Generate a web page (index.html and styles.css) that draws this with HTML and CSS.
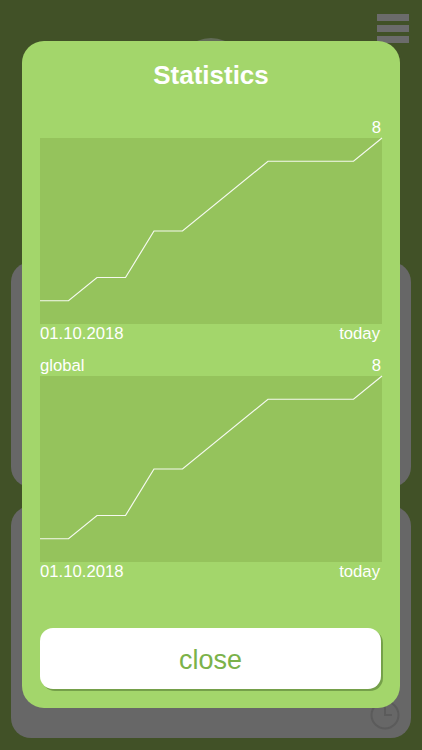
FILE: index.html
```html
<!DOCTYPE html>
<html lang="en">
<head>
    <meta charset="UTF-8">
    <title>Statistics</title>
    <link rel="stylesheet" href="styles.css">
</head>
<body>
    <div class="page">
        <div class="topbar">
            <div class="menu">
                <span></span><span></span><span></span>
            </div>
        </div>
        <div class="avatar"></div>
        <div class="card card-top"></div>
        <div class="card card-bottom">
            <svg class="clock" width="30" height="30" viewBox="0 0 30 30">
                <circle cx="15" cy="15" r="13.5" fill="none" stroke="#5b5b5b" stroke-width="2"/>
                <path d="M15 6 V15 H22" fill="none" stroke="#5b5b5b" stroke-width="2"/>
            </svg>
        </div>
    </div>

    <div class="modal">
        <h1 class="title">Statistics</h1>

        <div class="stat">
            <div class="stat-head"><span></span><span>8</span></div>
            <div class="chart">
                <svg viewBox="0 0 12 8" preserveAspectRatio="none">
                    <polyline points="0,7 1,7 2,6 3,6 4,4 5,4 8,1 11,1 12,0"/>
                </svg>
            </div>
            <div class="stat-foot"><span>01.10.2018</span><span>today</span></div>
        </div>

        <div class="stat">
            <div class="stat-head"><span>global</span><span>8</span></div>
            <div class="chart">
                <svg viewBox="0 0 12 8" preserveAspectRatio="none">
                    <polyline points="0,7 1,7 2,6 3,6 4,4 5,4 8,1 11,1 12,0"/>
                </svg>
            </div>
            <div class="stat-foot"><span>01.10.2018</span><span>today</span></div>
        </div>

        <button class="close" type="button">close</button>
    </div>
</body>
</html>
```

FILE: styles.css
```css
body { margin: 0; background: #415127; font-family: "Liberation Sans", Arial, sans-serif; }

.page { width: 422px; height: 750px; display: flex; flex-direction: column; align-items: center; overflow: hidden; }
.topbar { align-self: stretch; display: flex; justify-content: flex-end; padding: 14px 13px 0 0; }
.menu { display: flex; flex-direction: column; gap: 4px; }
.menu span { display: block; width: 32px; height: 7px; background: #6b6b6b; }
.avatar { width: 70px; height: 70px; margin-top: -5px; border-radius: 50%; background: #626b58; }
.card { width: 400px; background: #676767; border-radius: 20px; }
.card-top { height: 225px; margin-top: 154px; }
.card-bottom { height: 232px; margin-top: 19px; display: flex; align-items: flex-end; justify-content: flex-end; padding: 0 11px 8px 0; box-sizing: border-box; }

.modal {
    position: absolute; left: 22px; top: 41px;
    width: 378px; height: 667px; box-sizing: border-box;
    padding: 18.5px 18px 19px;
    background: #a3d66b; border-radius: 22px;
    display: flex; flex-direction: column;
    color: #fff;
}
.title { margin: 0 0 30px; font-size: 26px; line-height: 30px; font-weight: bold; text-align: center; }

.stat { display: flex; flex-direction: column; gap: 2px; }
.stat + .stat { margin-top: 16px; }
.stat-head, .stat-foot { display: flex; justify-content: space-between; font-size: 16.7px; line-height: 16px; height: 16px; }
.stat-head span:last-child { padding-right: 1px; }
.stat-foot span:last-child { padding-right: 2px; }
.chart { height: 186px; background: #95c35c; }
.chart svg { display: block; width: 100%; height: 100%; overflow: visible; }
.chart polyline { fill: none; stroke: rgba(255,255,255,0.9); stroke-width: 1.2; vector-effect: non-scaling-stroke; }

.close {
    margin-top: auto; height: 61px; width: 341px;
    border: none; border-radius: 13px; background: #fff;
    box-shadow: 2px 2px 0 #75a04a;
    color: #7bb24a; font-family: inherit; font-size: 27px;
    padding: 4px 0 0;
}
```
